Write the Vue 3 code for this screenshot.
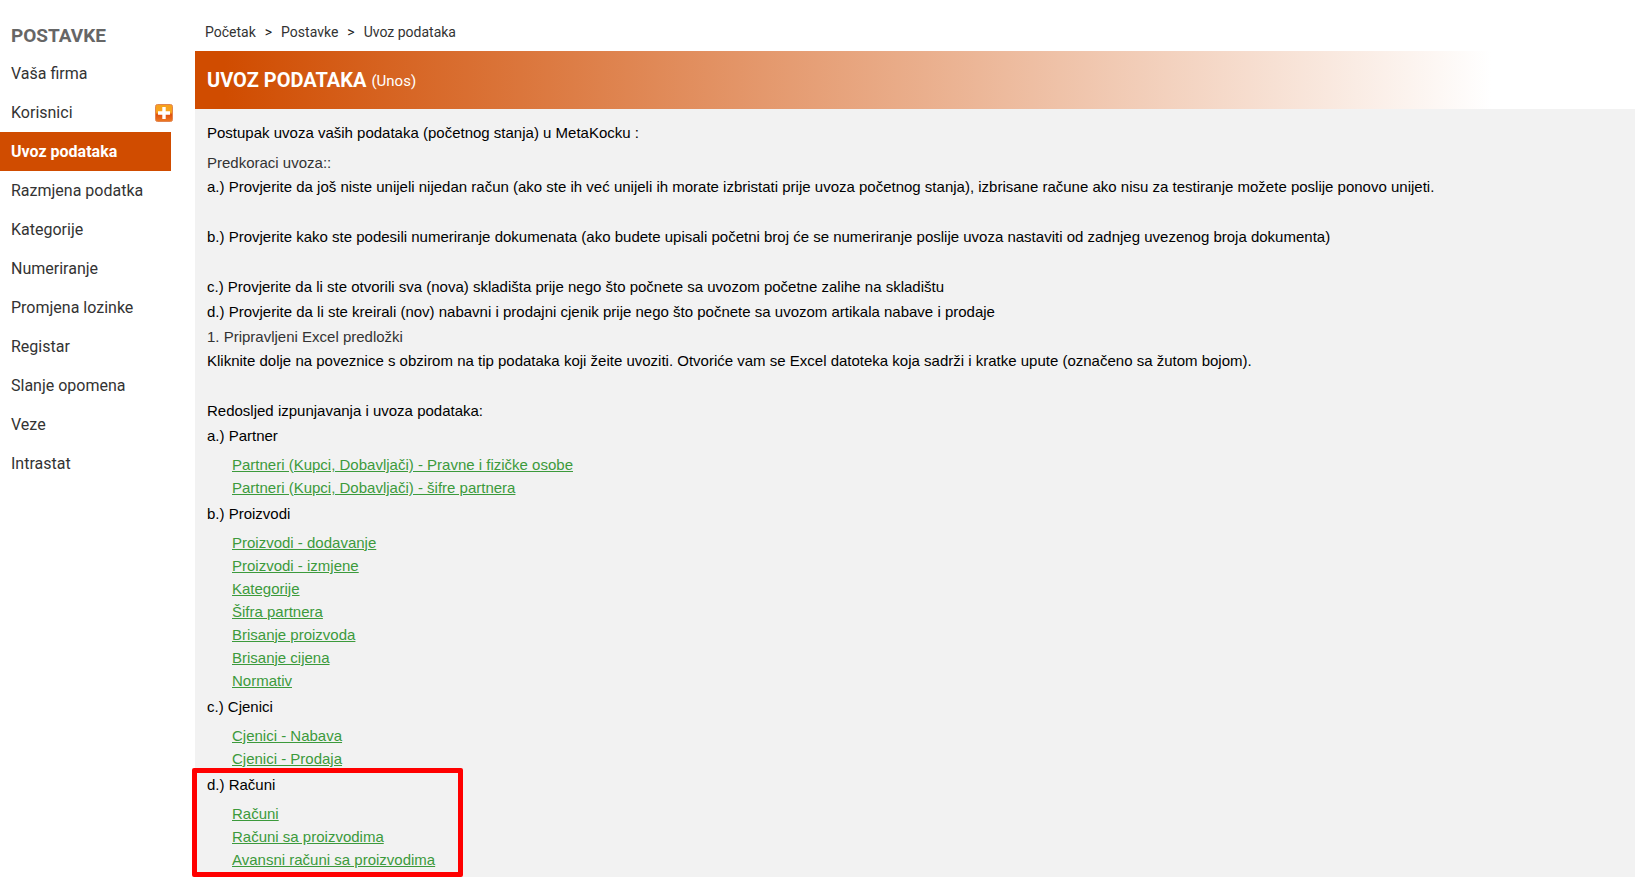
<script setup>
const menu = [
  { label: 'Vaša firma' },
  { label: 'Korisnici', add: true },
  { label: 'Uvoz podataka', active: true },
  { label: 'Razmjena podatka' },
  { label: 'Kategorije' },
  { label: 'Numeriranje' },
  { label: 'Promjena lozinke' },
  { label: 'Registar' },
  { label: 'Slanje opomena' },
  { label: 'Veze' },
  { label: 'Intrastat' },
]

const groups = [
  {
    title: 'a.) Partner',
    links: [
      'Partneri (Kupci, Dobavljači) - Pravne i fizičke osobe',
      'Partneri (Kupci, Dobavljači) - šifre partnera',
    ],
  },
  {
    title: 'b.) Proizvodi',
    links: [
      'Proizvodi - dodavanje',
      'Proizvodi - izmjene',
      'Kategorije',
      'Šifra partnera',
      'Brisanje proizvoda',
      'Brisanje cijena',
      'Normativ',
    ],
  },
  { title: 'c.) Cjenici', links: ['Cjenici - Nabava', 'Cjenici - Prodaja'] },
  {
    title: 'd.) Računi',
    marked: true,
    links: ['Računi', 'Računi sa proizvodima', 'Avansni računi sa proizvodima'],
  },
]
</script>

<template>
  <div class="page">
    <aside class="sidebar">
      <h2 class="side-title">POSTAVKE</h2>
      <nav>
        <ul class="menu">
          <li v-for="m in menu" :key="m.label" class="menu-row" :class="{ active: m.active }">
            <a href="#" class="menu-link">{{ m.label }}</a>
            <button v-if="m.add" type="button" class="add" aria-label="Dodaj">
              <svg width="18" height="18" viewBox="0 0 18 18">
                <defs>
                  <linearGradient id="plusFill" x1="0" y1="0" x2="0" y2="1">
                    <stop offset="0" stop-color="#f6a01c" />
                    <stop offset="0.45" stop-color="#f8a51e" />
                    <stop offset="0.6" stop-color="#e0500f" />
                    <stop offset="1" stop-color="#ee7a22" />
                  </linearGradient>
                </defs>
                <rect x="0.5" y="0.5" width="17" height="17" rx="2" fill="url(#plusFill)" stroke="#e2854f" />
                <path d="M7.3 3h3.4v4.3H15v3.4h-4.3V15H7.3v-4.3H3V7.3h4.3z" fill="#fff" />
              </svg>
            </button>
          </li>
        </ul>
      </nav>
    </aside>

    <main class="main">
      <nav class="crumbs">
        <a href="#">Početak</a><span>&gt;</span><a href="#">Postavke</a><span>&gt;</span><a href="#">Uvoz podataka</a>
      </nav>
      <header class="banner">
        <h1>UVOZ PODATAKA</h1>
        <span class="mode">(Unos)</span>
      </header>
      <section class="content">
        <p class="intro">Postupak uvoza vaših podataka (početnog stanja) u MetaKocku :</p>
        <h3>Predkoraci uvoza::</h3>
        <p class="spaced">a.) Provjerite da još niste unijeli nijedan račun (ako ste ih već unijeli ih morate izbristati prije uvoza početnog stanja), izbrisane račune ako nisu za testiranje možete poslije ponovo unijeti.</p>
        <p class="spaced">b.) Provjerite kako ste podesili numeriranje dokumenata (ako budete upisali početni broj će se numeriranje poslije uvoza nastaviti od zadnjeg uvezenog broja dokumenta)</p>
        <p>c.) Provjerite da li ste otvorili sva (nova) skladišta prije nego što počnete sa uvozom početne zalihe na skladištu</p>
        <p>d.) Provjerite da li ste kreirali (nov) nabavni i prodajni cjenik prije nego što počnete sa uvozom artikala nabave i prodaje</p>
        <h3>1. Pripravljeni Excel predložki</h3>
        <p class="spaced">Kliknite dolje na poveznice s obzirom na tip podataka koji žeite uvoziti. Otvoriće vam se Excel datoteka koja sadrži i kratke upute (označeno sa žutom bojom).</p>
        <p>Redosljed izpunjavanja i uvoza podataka:</p>
        <div v-for="g in groups" :key="g.title" class="group" :class="{ marked: g.marked }">
          <p>{{ g.title }}</p>
          <ul class="links">
            <li v-for="l in g.links" :key="l"><a href="#">{{ l }}</a></li>
          </ul>
        </div>
      </section>
    </main>
  </div>
</template>

<style>
body {
  margin: 0;
  background: #fff;
}
</style>

<style scoped>
.page {
  display: flex;
  min-height: 100vh;
  font-family: Roboto, "Liberation Sans", sans-serif;
  color: #333;
}
h1, h2, h3, p, ul {
  margin: 0;
  padding: 0;
}
ul {
  list-style: none;
}
.sidebar {
  flex: 0 0 195px;
}
.side-title {
  padding: 23px 0 6px 11px;
  font-size: 19px;
  line-height: 25px;
  font-weight: 700;
  color: #666;
}
.menu-row {
  display: flex;
  align-items: center;
  justify-content: space-between;
  width: 173px;
  height: 39px;
}
.menu-link {
  padding-left: 11px;
  font-size: 16px;
  line-height: 39px;
  color: #333;
  text-decoration: none;
}
.menu-row.active {
  width: 171px;
  background: #d04c00;
}
.active .menu-link {
  color: #fff;
  font-weight: 700;
}
.add {
  display: flex;
  padding: 0;
  border: 0;
  background: none;
}
.main {
  flex: 1;
  min-width: 0;
  display: flex;
  flex-direction: column;
}
.crumbs {
  display: flex;
  gap: 9px;
  padding: 20px 10px 7px;
  font-size: 14px;
  line-height: 24px;
}
.crumbs a {
  color: #333;
  text-decoration: none;
}
.crumbs span {
  color: #222;
}
.banner {
  display: flex;
  align-items: center;
  gap: 5px;
  min-height: 58px;
  padding: 0 12px;
  color: #fff;
  background: linear-gradient(to right, #d04c00 0%, #d04c00 2%, #fff 90%);
}
.banner h1 {
  padding-top: 1px;
  font-size: 20px;
  line-height: 57px;
  font-weight: 700;
}
.mode {
  padding-top: 1px;
  font-size: 15px;
}
.content {
  flex: 1;
  padding: 11px 12px 0;
  background: #f2f2f2;
  font-family: "Liberation Sans", Arial, sans-serif;
  font-size: 15px;
  line-height: 25px;
  color: #000;
}
.intro {
  margin-bottom: 6px;
}
.content h3 {
  margin-top: 1px;
  font-size: 15px;
  line-height: 23px;
  font-weight: 400;
  color: #333;
}
.spaced {
  margin-bottom: 25px;
}
.group {
  position: relative;
}
.links {
  padding: 5px 0 2px 25px;
  line-height: 23px;
}
.links a {
  color: #3c9a3c;
}
.marked::after {
  content: "";
  position: absolute;
  top: -4px;
  bottom: -4px;
  left: -15px;
  width: 261px;
  border: 5px solid #f00;
  border-radius: 2px;
  pointer-events: none;
}
</style>
